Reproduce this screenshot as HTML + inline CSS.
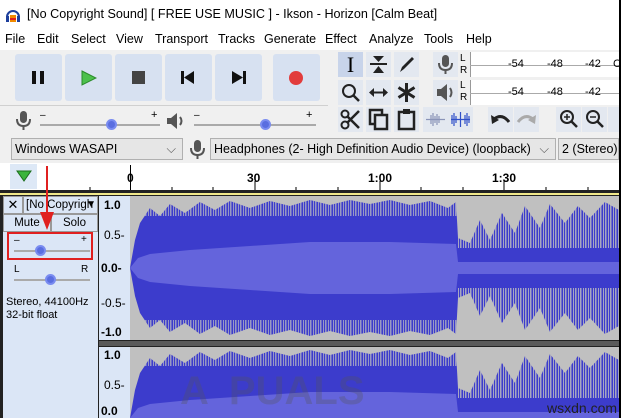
<!DOCTYPE html>
<html><head><meta charset="utf-8"><style>
*{margin:0;padding:0;box-sizing:border-box}
html,body{width:621px;height:418px;overflow:hidden}
body{background:#fff;font-family:"Liberation Sans",sans-serif;position:relative;font-size:12px}
.a{position:absolute}
.m{position:absolute;top:32px;font-size:12.5px;white-space:nowrap}
.btn{position:absolute;top:54px;width:47px;height:47px;background:#d7e1f1;border-radius:3px}
.dd{position:absolute;top:138px;height:22px;background:#e6e6e6;border:1px solid #b0b0b0;font-size:12.5px;line-height:20px;padding-left:3px;color:#000;white-space:nowrap;overflow:hidden}
.tb{position:absolute;width:25px;height:25px;background:#e3e8f0;overflow:hidden}
.s{position:absolute;font-size:12px;line-height:14px}
</style></head><body>
<svg class="a" style="left:5px;top:7px" width="16" height="16"><path d="M2 10 A6 6 0 0 1 14 10" fill="none" stroke="#1d3f9c" stroke-width="2"/><rect x="1" y="9" width="3" height="6" fill="#1d3f9c"/><rect x="12" y="9" width="3" height="6" fill="#1d3f9c"/><rect x="5" y="8" width="6" height="7" fill="#f08a00"/><rect x="5" y="11" width="6" height="2" fill="#e02020"/></svg>
<div class="a" style="left:27px;top:7px;font-size:12.6px;white-space:nowrap">[No Copyright Sound] [ FREE USE MUSIC ] - Ikson - Horizon [Calm Beat]</div>
<div class="m" style="left:5px">File</div><div class="m" style="left:37px">Edit</div><div class="m" style="left:71px">Select</div><div class="m" style="left:116px">View</div><div class="m" style="left:155px">Transport</div><div class="m" style="left:218px">Tracks</div><div class="m" style="left:264px">Generate</div><div class="m" style="left:325px">Effect</div><div class="m" style="left:369px">Analyze</div><div class="m" style="left:424px">Tools</div><div class="m" style="left:466px">Help</div>
<div class="a" style="left:0;top:50px;width:619px;height:113px;background:#f0f0f0"></div>
<div class="a" style="left:619px;top:0;width:2px;height:418px;background:#000"></div>
<div class="btn" style="left:15px"><div class="a" style="left:17px;top:17px;width:4px;height:13px;background:#111"></div><div class="a" style="left:25px;top:17px;width:4px;height:13px;background:#111"></div></div>
<div class="btn" style="left:65px"><svg class="a" style="left:16px;top:16px" width="16" height="16"><path d="M1 1 L15 8 L1 15Z" fill="#4cc04c" stroke="#2a8a2a"/></svg></div>
<div class="btn" style="left:115px"><div class="a" style="left:17px;top:17px;width:13px;height:13px;background:#444"></div></div>
<div class="btn" style="left:165px"><svg class="a" style="left:16px;top:17px" width="14" height="13"><rect x="0" y="0" width="3" height="13" fill="#111"/><path d="M13 0 L3 6.5 L13 13Z" fill="#111"/></svg></div>
<div class="btn" style="left:215px"><svg class="a" style="left:17px;top:17px" width="14" height="13"><rect x="11" y="0" width="3" height="13" fill="#111"/><path d="M0 0 L11 6.5 L0 13Z" fill="#111"/></svg></div>
<div class="btn" style="left:273px"><div class="a" style="left:16px;top:17px;width:14px;height:14px;border-radius:50%;background:#e23c3c"></div></div>
<div class="a" style="left:0;top:105px;width:328px;height:1px;background:#d0d0d0"></div>
<svg class="a" style="left:14px;top:110px" width="20" height="22"><rect x="6" y="1" width="7" height="12" rx="3.5" fill="#555"/><path d="M3 9 Q3 16 9.5 16 Q16 16 16 9" fill="none" stroke="#555" stroke-width="2"/><rect x="8.5" y="16" width="2" height="4" fill="#555"/></svg>
<div class="a" style="left:40px;top:110px;font-size:10px">–</div><div class="a" style="left:151px;top:109px;font-size:11px">+</div>
<div class="a" style="left:40px;top:124px;width:120px;height:2px;background:#aaa"></div>
<div class="a" style="left:106px;top:119px;width:11px;height:11px;border-radius:50%;background:#5a6ee0;border:2px solid #7a8cf0"></div>
<svg class="a" style="left:166px;top:112px" width="20" height="18"><path d="M1 6 H5 L11 1 V17 L5 12 H1Z" fill="#555"/><path d="M14 5 Q17 9 14 13" fill="none" stroke="#555" stroke-width="2"/></svg>
<div class="a" style="left:194px;top:110px;font-size:10px">–</div><div class="a" style="left:306px;top:109px;font-size:11px">+</div>
<div class="a" style="left:194px;top:124px;width:122px;height:2px;background:#aaa"></div>
<div class="a" style="left:260px;top:119px;width:11px;height:11px;border-radius:50%;background:#5a6ee0;border:2px solid #7a8cf0"></div>
<div class="tb" style="left:338px;top:52px;background:#c8d4ea;font-size:22px;line-height:25px;text-align:center;font-family:'Liberation Serif',serif">I</div>
<div class="tb" style="left:366px;top:52px"><svg width="25" height="25"><path d="M4 12 H21" stroke="#222" stroke-width="2"/><path d="M7 4 H18 L12.5 10Z M7 21 H18 L12.5 14Z" fill="#222"/></svg></div>
<div class="tb" style="left:394px;top:52px"><svg width="25" height="25"><path d="M6 20 L8 15 L18 5 L20 7 L10 17Z" fill="#222"/></svg></div>
<div class="tb" style="left:338px;top:80px"><svg width="25" height="25"><circle cx="11" cy="11" r="6" fill="none" stroke="#222" stroke-width="2"/><path d="M15 15 L21 21" stroke="#222" stroke-width="2.5"/></svg></div>
<div class="tb" style="left:366px;top:80px"><svg width="25" height="25"><path d="M5 12.5 H20" stroke="#222" stroke-width="2"/><path d="M3 12.5 L8 8 V17Z M22 12.5 L17 8 V17Z" fill="#222"/></svg></div>
<div class="tb" style="left:394px;top:80px"><svg width="25" height="25"><path d="M12.5 3 V22 M4.5 7.5 L20.5 17.5 M4.5 17.5 L20.5 7.5" stroke="#222" stroke-width="3"/></svg></div>
<div class="tb" style="left:433px;top:52px"><svg width="25" height="25"><rect x="9" y="3" width="7" height="12" rx="3.5" fill="#555"/><path d="M6 11 Q6 18 12.5 18 Q19 18 19 11" fill="none" stroke="#555" stroke-width="2"/><rect x="11.5" y="18" width="2" height="4" fill="#555"/></svg></div>
<div class="tb" style="left:433px;top:80px"><svg width="25" height="25"><path d="M4 9 H8 L14 4 V21 L8 16 H4Z" fill="#555"/><path d="M17 8 Q20 12.5 17 17" fill="none" stroke="#555" stroke-width="2"/></svg></div>
<div class="a" style="left:460px;top:53px;font-size:10px;line-height:12px">L<br>R</div>
<div class="a" style="left:460px;top:80px;font-size:10px;line-height:12px">L<br>R</div>
<div class="a" style="left:470px;top:52px;width:149px;height:25px;background:#fff;border-left:1px solid #999"></div>
<div class="a" style="left:470px;top:80px;width:149px;height:25px;background:#fff;border-left:1px solid #999"></div>
<div class="a" style="left:470px;top:65px;width:149px;height:1px;background:#aaa"></div>
<div class="a" style="left:470px;top:93px;width:149px;height:1px;background:#aaa"></div>
<div class="a" style="left:508px;top:58px;font-size:11px">-54</div><div class="a" style="left:547px;top:58px;font-size:11px">-48</div><div class="a" style="left:585px;top:58px;font-size:11px">-42</div><div class="a" style="left:613px;top:58px;font-size:11px">C</div>
<div class="a" style="left:508px;top:86px;font-size:11px">-54</div><div class="a" style="left:547px;top:86px;font-size:11px">-48</div><div class="a" style="left:585px;top:86px;font-size:11px">-42</div>
<div class="tb" style="left:338px;top:107px"><svg width="25" height="25"><circle cx="7" cy="18" r="3.5" fill="none" stroke="#222" stroke-width="2"/><circle cx="7" cy="7" r="3.5" fill="none" stroke="#222" stroke-width="2"/><path d="M9 16 L21 4 M9 9 L21 21" stroke="#222" stroke-width="2.5"/></svg></div>
<div class="tb" style="left:366px;top:107px"><svg width="25" height="25"><rect x="4" y="3" width="12" height="14" fill="none" stroke="#222" stroke-width="2.5"/><rect x="9" y="8" width="12" height="14" fill="#e3e8f0" stroke="#222" stroke-width="2.5"/></svg></div>
<div class="tb" style="left:394px;top:107px"><svg width="25" height="25"><rect x="5" y="5" width="15" height="17" fill="none" stroke="#222" stroke-width="2.5"/><rect x="9" y="2" width="7" height="5" fill="#222"/></svg></div>
<div class="tb" style="left:423px;top:107px"><svg width="25" height="25"><path d="M3 12.5H22 M8 8V17 M10 6V19 M12 9V16 M14 7V18 M16 9V16" stroke="#8a94b8" stroke-width="1.2"/></svg></div>
<div class="tb" style="left:448px;top:107px"><svg width="25" height="25"><path d="M4 8V17 M6 6V19 M8 9V16 M12.5 5V20 M3 12.5H22 M17 8V17 M19 6V19 M21 9V16" stroke="#3050c8" stroke-width="1.2"/></svg></div>
<div class="tb" style="left:488px;top:107px"><svg width="25" height="25"><path d="M6 12 Q14 6 21 15" fill="none" stroke="#222" stroke-width="3"/><path d="M3 8 L4 17 L11 13Z" fill="#222"/></svg></div>
<div class="tb" style="left:514px;top:107px"><svg width="25" height="25"><path d="M19 12 Q11 6 4 15" fill="none" stroke="#aaa" stroke-width="3"/><path d="M22 8 L21 17 L14 13Z" fill="#aaa"/></svg></div>
<div class="tb" style="left:556px;top:107px"><svg width="25" height="25"><circle cx="11" cy="10" r="6" fill="none" stroke="#222" stroke-width="2"/><path d="M15 14 L21 20" stroke="#222" stroke-width="2.5"/><path d="M8 10 H14 M11 7 V13" stroke="#222" stroke-width="1.5"/></svg></div>
<div class="tb" style="left:582px;top:107px"><svg width="25" height="25"><circle cx="11" cy="10" r="6" fill="none" stroke="#222" stroke-width="2"/><path d="M15 14 L21 20" stroke="#222" stroke-width="2.5"/><path d="M8 10 H14" stroke="#222" stroke-width="1.5"/></svg></div>
<div class="tb" style="left:608px;top:107px;width:11px"></div>
<div class="dd" style="left:11px;width:172px">Windows WASAPI<span style="position:absolute;right:6px;color:#555">⌵</span></div>
<svg class="a" style="left:188px;top:139px" width="20" height="22"><rect x="6" y="1" width="7" height="12" rx="3.5" fill="#555"/><path d="M3 9 Q3 16 9.5 16 Q16 16 16 9" fill="none" stroke="#555" stroke-width="2"/><rect x="8.5" y="16" width="2" height="4" fill="#555"/></svg>
<div class="dd" style="left:210px;width:346px">Headphones (2- High Definition Audio Device) (loopback)<span style="position:absolute;right:6px;color:#555">⌵</span></div>
<div class="dd" style="left:558px;width:61px">2 (Stereo) R</div>
<div class="a" style="left:0;top:163px;width:619px;height:28px;background:#fff"></div>
<div class="a" style="left:10px;top:164px;width:27px;height:25px;background:#dde8f6"></div>
<svg class="a" style="left:16px;top:170px" width="16" height="12"><path d="M1 1 H15 L8 11Z" fill="#3cb43c" stroke="#1c6e1c"/></svg>
<div class="a" style="left:130px;top:165px;width:1px;height:25px;background:#000"></div>
<div class="a" style="left:127px;top:171px;font-size:12px;font-weight:bold">0</div>
<div class="a" style="left:247px;top:171px;font-size:12px;font-weight:bold">30</div>
<div class="a" style="left:368px;top:171px;font-size:12px;font-weight:bold">1:00</div>
<div class="a" style="left:492px;top:171px;font-size:12px;font-weight:bold">1:30</div>
<svg class="a" style="left:0;top:163px" width="619" height="28"><g stroke="#000"><path d="M90 24V28M172 24V28M213 24V28M255 18V28M296 24V28M338 24V28M380 18V28M421 24V28M463 24V28M504 18V28M546 24V28M588 24V28"/></g></svg>
<div class="a" style="left:0;top:190px;width:619px;height:3px;background:#222"></div>
<div class="a" style="left:0;top:193px;width:619px;height:2px;background:#f0e88a"></div>
<div class="a" style="left:0;top:195px;width:619px;height:223px;background:#222"></div>
<div class="a" style="left:3px;top:196px;width:95px;height:222px;background:#dbe6f6"></div>
<div class="a" style="left:3px;top:196px;width:20px;height:18px;border:1px solid #999;font-size:13px;text-align:center;line-height:16px">✕</div>
<div class="a" style="left:23px;top:196px;width:75px;height:18px;border:1px solid #999;font-size:11.5px;line-height:16px;padding-left:2px;white-space:nowrap;overflow:hidden">[No Copyrigh<span style="position:absolute;right:1px;font-size:10px">▼</span></div>
<div class="a" style="left:3px;top:214px;width:48px;height:18px;border:1px solid #999;font-size:11.5px;line-height:16px;text-align:center">Mute</div>
<div class="a" style="left:51px;top:214px;width:47px;height:18px;border:1px solid #999;font-size:11.5px;line-height:16px;text-align:center">Solo</div>
<div class="a" style="left:14px;top:235px;font-size:10px">–</div><div class="a" style="left:81px;top:234px;font-size:10px">+</div>
<div class="a" style="left:14px;top:250px;width:76px;height:2px;background:#aaa"></div>
<div class="a" style="left:35px;top:245px;width:11px;height:11px;border-radius:50%;background:#5a6ee0;border:2px solid #7a8cf0"></div>
<div class="a" style="left:7px;top:232px;width:86px;height:28px;border:2px solid #e02020"></div>
<div class="a" style="left:14px;top:264px;font-size:10px">L</div><div class="a" style="left:81px;top:264px;font-size:10px">R</div>
<div class="a" style="left:14px;top:279px;width:76px;height:2px;background:#aaa"></div>
<div class="a" style="left:45px;top:274px;width:11px;height:11px;border-radius:50%;background:#5a6ee0;border:2px solid #7a8cf0"></div>
<div class="a" style="left:6px;top:296px;font-size:11px;line-height:13px">Stereo, 44100Hz<br>32-bit float</div>
<div class="a" style="left:46px;top:166px;width:2px;height:50px;background:#e02020"></div>
<svg class="a" style="left:40px;top:212px" width="14" height="18"><path d="M0 0 H14 L7 18Z" fill="#e02020"/></svg>
<div class="a" style="left:99px;top:196px;width:31px;height:144px;background:#dbe6f6"></div>
<div class="a" style="left:99px;top:347px;width:31px;height:71px;background:#dbe6f6"></div>
<div class="a" style="left:99px;top:340px;width:520px;height:7px;background:#5a5a5a;border-top:1px solid #222;border-bottom:1px solid #222"></div>
<div class="s" style="left:104px;top:198px;font-weight:bold">1.0</div>
<div class="s" style="left:104px;top:228px">0.5-</div>
<div class="s" style="left:101px;top:261px;font-weight:bold">0.0-</div>
<div class="s" style="left:101px;top:296px">-0.5-</div>
<div class="s" style="left:101px;top:325px;font-weight:bold">-1.0</div>
<div class="s" style="left:104px;top:348px;font-weight:bold">1.0</div>
<div class="s" style="left:104px;top:378px">0.5-</div>
<div class="s" style="left:101px;top:404px;font-weight:bold;height:14px;overflow:hidden">0.0</div>
<svg class="a" style="left:130px;top:196px" width="489" height="222">
<defs>
<pattern id="p" width="5" height="200" patternUnits="userSpaceOnUse"><rect x="0" width="1.5" height="200" fill="#c0c0c0"/><rect x="3" width="1" height="200" fill="#c0c0c0"/></pattern>
</defs>
<rect width="489" height="144" fill="#c0c0c0"/>
<rect y="151" width="489" height="71" fill="#c0c0c0"/>
<g id="ch" transform="translate(0,72)">
<path d="M0 0 L5 -28 L10 -45 L20 -60 L30 -52 L40 -64 L55 -55 L70 -66 L85 -58 L100 -67 L120 -60 L140 -67 L160 -62 L180 -68 L200 -63 L220 -68 L240 -64 L260 -68 L280 -63 L300 -67 L318 -60 L326 -66 L328 -30 L340 -25 L350 -48 L360 -28 L372 -55 L385 -35 L395 -62 L410 -40 L420 -64 L435 -45 L448 -62 L460 -50 L475 -66 L489 -58 L489 58 L475 66 L460 50 L448 62 L435 45 L420 64 L410 40 L395 62 L385 35 L372 55 L360 28 L350 48 L340 25 L328 30 L326 66 L318 60 L300 67 L280 63 L260 68 L240 64 L220 68 L200 63 L180 68 L160 62 L140 67 L120 60 L100 67 L85 58 L70 66 L55 55 L40 64 L30 52 L20 60 L10 45 L5 28Z" fill="#3c3ccc"/>
<rect x="8" y="-70" width="320" height="18" fill="url(#p)" opacity="0.7"/>
<rect x="8" y="52" width="320" height="18" fill="url(#p)" opacity="0.7"/>
<rect x="328" y="-70" width="161" height="50" fill="url(#p)" opacity="0.8"/>
<rect x="328" y="20" width="161" height="50" fill="url(#p)" opacity="0.8"/>
<path d="M0 0 L8 -10 L20 -14 L60 -18 L120 -22 L180 -26 L260 -26 L326 -24 L328 -6 L489 -6 L489 6 L328 6 L326 24 L260 26 L180 26 L120 22 L60 18 L20 14 L8 10Z" fill="#6464dc"/>
</g>
<g transform="translate(0,150)"><use href="#ch"/></g>
<text x="50" y="208" font-size="40" font-weight="bold" fill="#555" fill-opacity="0.3" font-family="Liberation Sans">A&#8202;&#8202;&#8202;&#8202;&#8202;&#8202;PUALS</text>
<text x="417" y="217" font-size="14" fill="#222" font-family="Liberation Sans">wsxdn.com</text>
</svg>
</body></html>
